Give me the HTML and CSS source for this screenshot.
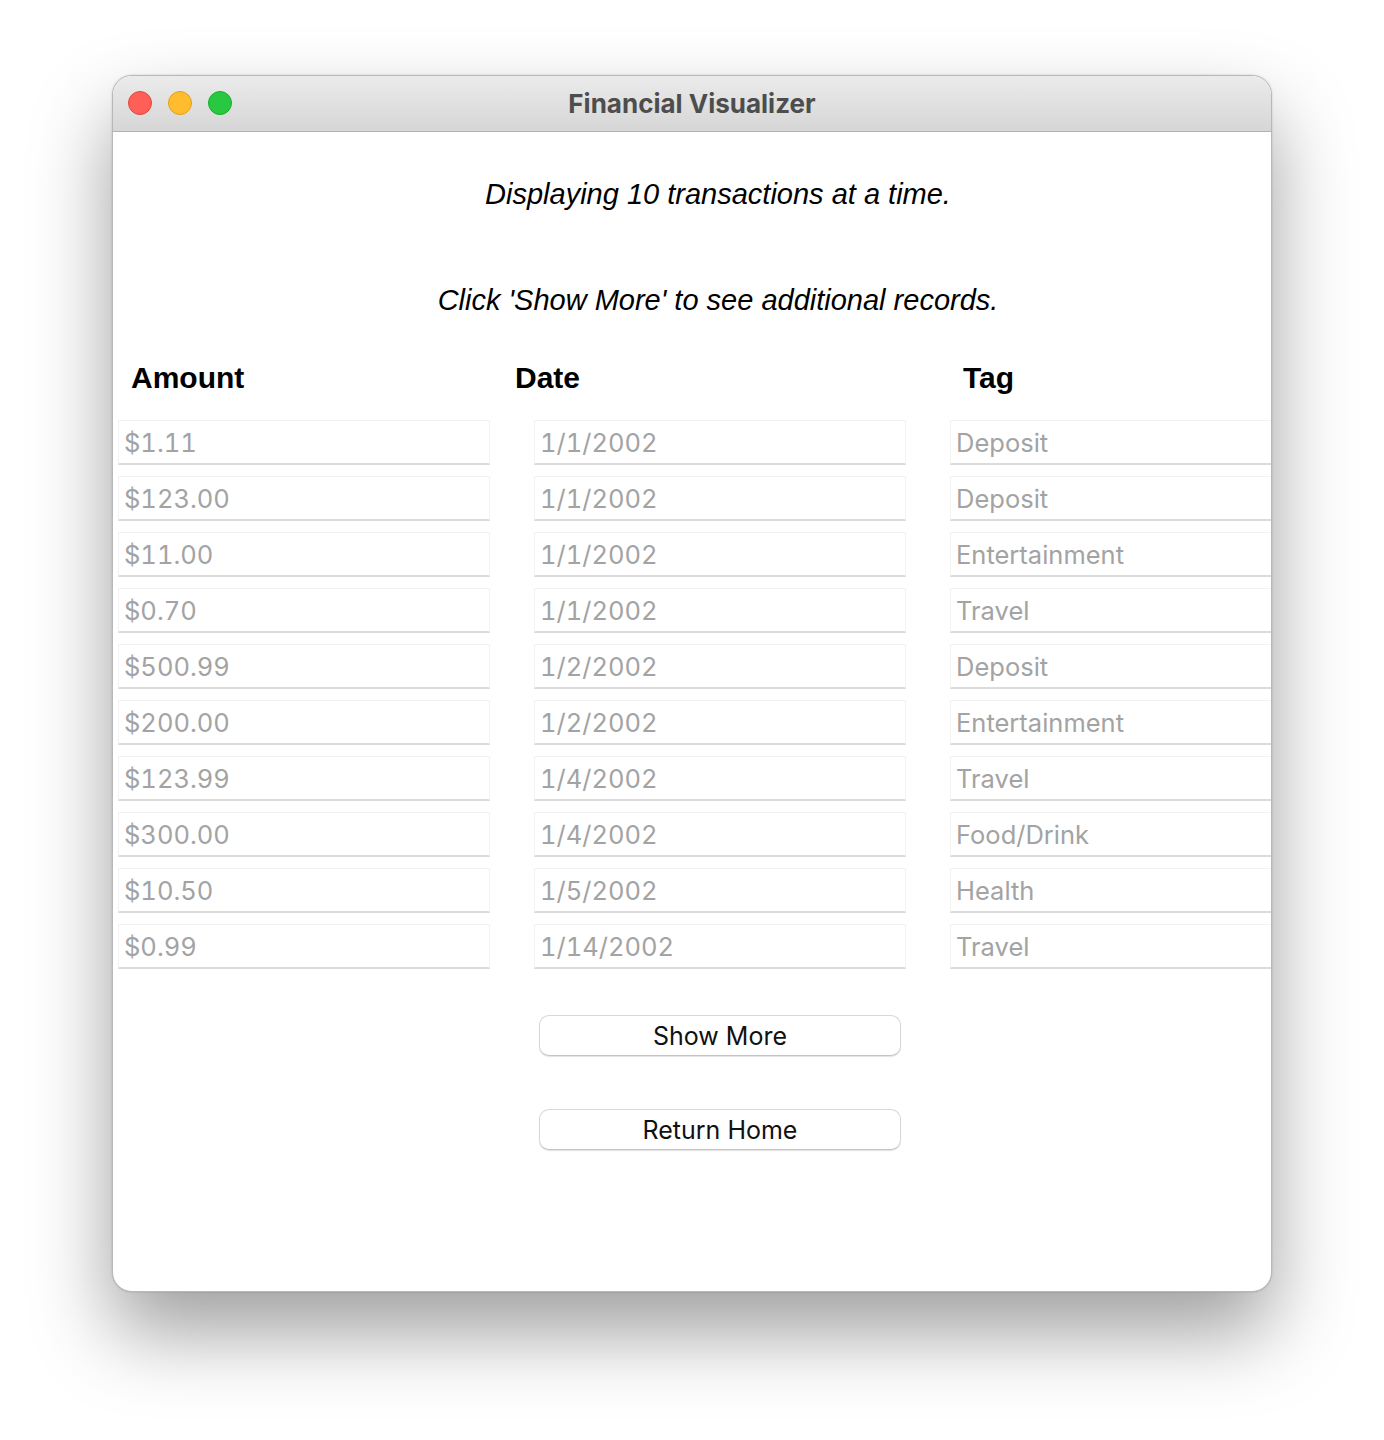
FILE: index.html
```
<!DOCTYPE html>
<html>
<head>
<meta charset="utf-8">
<link rel="stylesheet" href="styles.css">
</head>
<body>
<div class="window">
  <div class="titlebar">
    <div class="lights">
      <span class="light red"></span>
      <span class="light yellow"></span>
      <span class="light green"></span>
    </div>
    <div class="title">Financial Visualizer</div>
  </div>
  <div class="content">
    <p class="note note-first">Displaying 10 transactions at a time.</p>
    <p class="note note-second">Click 'Show More' to see additional records.</p>
    <div class="headers">
      <div class="h h-amount">Amount</div>
      <div class="h h-date">Date</div>
      <div class="h h-tag">Tag</div>
    </div>
    <div class="rows">
      <div class="field">$1.11</div><div class="field">1/1/2002</div><div class="field">Deposit</div>
      <div class="field">$123.00</div><div class="field">1/1/2002</div><div class="field">Deposit</div>
      <div class="field">$11.00</div><div class="field">1/1/2002</div><div class="field">Entertainment</div>
      <div class="field">$0.70</div><div class="field">1/1/2002</div><div class="field">Travel</div>
      <div class="field">$500.99</div><div class="field">1/2/2002</div><div class="field">Deposit</div>
      <div class="field">$200.00</div><div class="field">1/2/2002</div><div class="field">Entertainment</div>
      <div class="field">$123.99</div><div class="field">1/4/2002</div><div class="field">Travel</div>
      <div class="field">$300.00</div><div class="field">1/4/2002</div><div class="field">Food/Drink</div>
      <div class="field">$10.50</div><div class="field">1/5/2002</div><div class="field">Health</div>
      <div class="field">$0.99</div><div class="field">1/14/2002</div><div class="field">Travel</div>
    </div>
    <div class="buttons">
      <button class="btn">Show More</button>
      <button class="btn">Return Home</button>
    </div>
  </div>
</div>
</body>
</html>
```
FILE: styles.css
```
html, body {
  margin: 0;
  padding: 0;
  background: #ffffff;
}
body {
  padding: 75px 112px 0 112px;
  height: 1440px;
  box-sizing: border-box;
  overflow: hidden;
}
.window {
  width: 1160px;
  height: 1217px;
  box-sizing: border-box;
  background: #ffffff;
  border-radius: 20px;
  border: 1px solid #b8b8b8;
  box-shadow: 0 40px 80px rgba(0,0,0,0.38), 0 0 2px rgba(0,0,0,0.2);
  overflow: hidden;
}
.titlebar {
  height: 56px;
  box-sizing: border-box;
  background: linear-gradient(#ebebeb, #d6d6d6);
  border-bottom: 1px solid #b2b2b2;
  display: flex;
  align-items: center;
  justify-content: center;
  position: relative;
}
.lights {
  position: absolute;
  left: 15px;
  top: 15px;
  display: flex;
  gap: 16px;
}
.light {
  width: 24px;
  height: 24px;
  border-radius: 50%;
  box-sizing: border-box;
}
.red { background: #ff5f57; border: 1px solid #e2463f; }
.yellow { background: #febc2e; border: 1px solid #e1a116; }
.green { background: #28c840; border: 1px solid #14ae2c; }
.title {
  font-family: Inter, "Noto Sans", sans-serif;
  font-weight: 700;
  font-size: 26px;
  color: #4d4d4d;
}
.content {
  font-family: "Liberation Sans", Arial, sans-serif;
}
.note {
  margin: 0;
  text-align: center;
  font-style: italic;
  font-size: 29px;
  color: #000;
  padding-left: 52px;
  line-height: 32px;
}
.note-first { padding-top: 46px; }
.note-second { padding-top: 74px; }
.headers {
  display: flex;
  padding-left: 18px;
  margin-top: 44px;
  line-height: 36px;
}
.h {
  font-weight: 700;
  font-size: 30px;
  color: #000;
}
.h-amount { width: 384px; }
.h-date { width: 448px; }
.rows {
  margin-top: 24px;
  padding-left: 5px;
  display: grid;
  grid-template-columns: 372px 372px 372px;
  column-gap: 44px;
  row-gap: 11px;
}
.field {
  height: 45px;
  box-sizing: border-box;
  border: 1px solid #f2f2f2;
  border-bottom: 2px solid #dcdcdc;
  padding-left: 5px;
  font-family: Inter, "Noto Sans", sans-serif;
  font-variant-numeric: tabular-nums;
  font-size: 25.5px;
  line-height: 43px;
  color: #a3a3a3;
}
.buttons {
  display: flex;
  flex-direction: column;
  align-items: center;
  gap: 53px;
  margin-top: 46px;
  padding-left: 56px;
}
.btn {
  width: 362px;
  height: 41px;
  box-sizing: border-box;
  background: #fff;
  border: 1px solid #d8d8d8;
  border-bottom-color: #c4c4c4;
  border-radius: 10px;
  box-shadow: 0 1px 1px rgba(0,0,0,0.12);
  font-family: Inter, "Noto Sans", sans-serif;
  font-size: 25px;
  color: #111;
  padding: 0;
}
```
